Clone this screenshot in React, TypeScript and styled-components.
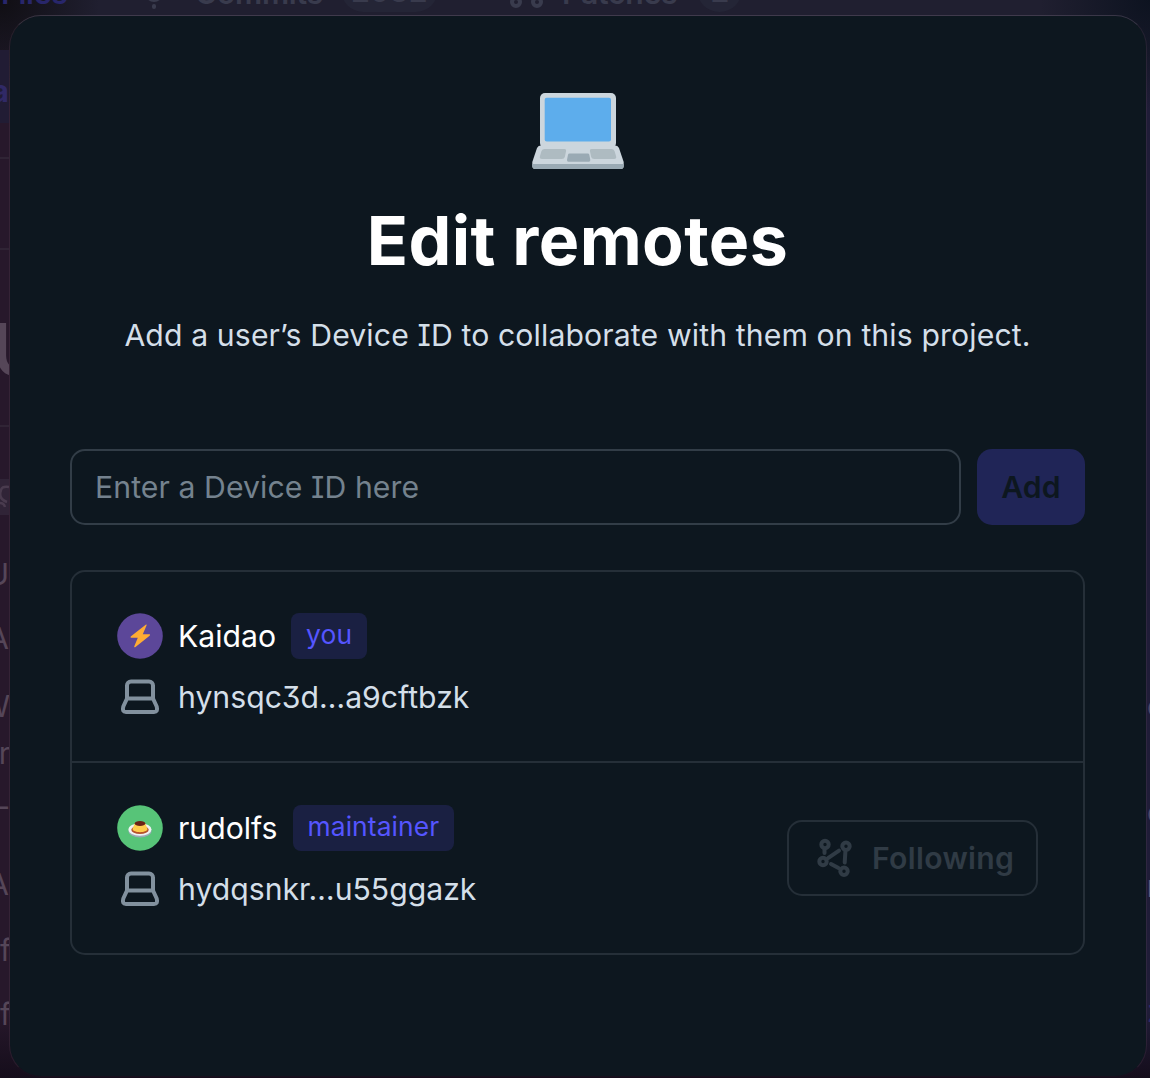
import React from "react";
import styled, { createGlobalStyle } from "styled-components";

const GlobalStyle = createGlobalStyle`
  * { box-sizing: border-box; }
  body { margin: 0; background: #14111b; }
  button, input { font: inherit; letter-spacing: inherit; }
`;

const Page = styled.div`
  width: 1150px;
  height: 1078px;
  overflow: hidden;
  display: grid;
  grid-template-columns: 9px 1138px 3px;
  grid-template-rows: 15px 1063px;
  font-family: Inter, "Noto Sans", sans-serif;
  font-feature-settings: "cv08", "cv09";
  font-size: 30.2px;
  letter-spacing: 0.08px;
  color: #d4dfe9;
  background:
    radial-gradient(circle at 0 0, #100e13 0, rgba(16, 14, 19, 0) 100px),
    radial-gradient(circle at 1150px 0, #0d1320 0, rgba(13, 19, 32, 0) 110px),
    linear-gradient(0deg, #150d1b 0, rgba(21, 13, 27, 0) 65px),
    linear-gradient(180deg, #201f30 0, #201f30 15px, rgba(32, 31, 48, 0) 110px),
    linear-gradient(90deg, #27182b 0, #27182b 10px, #201d38 1140px);
`;

const TabBar = styled.div`
  grid-column: 1 / -1;
  height: 15px;
  overflow: hidden;
  display: flex;
  align-items: flex-end;
  font-weight: 600;
  letter-spacing: -0.3px;
`;

const Tab = styled.div<{ $start: number; $active?: boolean }>`
  flex: none;
  width: 0;
  margin-left: ${(p) => p.$start}px;
  height: 44px;
  display: flex;
  align-items: center;
  line-height: 36px;
  white-space: nowrap;
  color: ${(p) => (p.$active ? "#28266b" : "#393b4d")};
`;

const Count = styled.span<{ $gap: number; $width: number }>`
  flex: none;
  width: ${(p) => p.$width}px;
  height: 45px;
  margin: -8px 0 0 ${(p) => p.$gap}px;
  border-radius: 23px;
  background: #242536;
  line-height: 49px;
  text-align: center;
  letter-spacing: 0;
`;

const TabGlyph = styled.svg`
  flex: none;
  width: 44px;
  height: 44px;
`;

const Gutter = styled.div<{ $right?: boolean }>`
  height: 1063px;
  overflow: hidden;
  display: flex;
  flex-direction: column;
  align-items: ${(p) => (p.$right ? "flex-start" : "flex-end")};
  color: #554658;
`;

const Slice = styled.div<{ $h: number; $fill?: string; $line?: string; $size?: number; $color?: string; $weight?: number; $bleed?: number; $drop?: number }>`
  flex: none;
  min-width: 100%;
  height: ${(p) => p.$h}px;
  line-height: ${(p) => p.$h + (p.$drop || 0) * 2}px;
  margin-right: ${(p) => -(p.$bleed || 0)}px;
  background: ${(p) => p.$fill || "transparent"};
  border-bottom: ${(p) => (p.$line ? `2px solid ${p.$line}` : "0")};
  font-size: ${(p) => p.$size || 30}px;
  font-weight: ${(p) => p.$weight || 400};
  color: ${(p) => p.$color || "inherit"};
  white-space: nowrap;
  letter-spacing: 0;
`;

const GutterIcon = styled.svg`
  display: block;
  width: 9px;
  height: 36px;
`;

const Dialog = styled.section`
  height: 1062px;
  padding: 77px 61px 0 60px;
  border: 1px solid rgba(112, 80, 100, 0.2);
  border-top-color: rgba(112, 100, 120, 0.4);
  border-bottom-color: rgba(32, 24, 38, 0.3);
  border-radius: 32px;
  background: #0d171f;
  background-clip: padding-box;
  display: flex;
  flex-direction: column;
`;

const LaptopEmoji = styled.svg`
  flex: none;
  width: 92px;
  height: 76px;
  align-self: center;
`;

const Title = styled.h1`
  margin: 27px 0 0;
  height: 88px;
  line-height: 88px;
  font-size: 68px;
  font-weight: 700;
  letter-spacing: 0.4px;
  text-align: center;
  color: #fff;
`;

const Description = styled.p`
  margin: 28px 0 0;
  height: 46px;
  line-height: 46px;
  text-align: center;
  white-space: nowrap;
  letter-spacing: 0.12px;
`;

const Apostrophe = styled.span`
  letter-spacing: -2.4px;
`;

const Form = styled.form`
  margin-top: 91px;
  height: 76px;
  display: flex;
  gap: 16px;
`;

const DeviceInput = styled.input`
  flex: 1;
  min-width: 0;
  padding: 0 23px;
  border: 2px solid #323d47;
  border-radius: 15px;
  outline: 0;
  background: transparent;
  color: #d4dfe9;
  &::placeholder { color: #74828e; opacity: 1; }
`;

const AddButton = styled.button`
  width: 108px;
  padding: 0;
  border: 0;
  border-radius: 15px;
  background: #202557;
  color: #0d171f;
  font-weight: 600;
`;

const RemoteList = styled.ul`
  list-style: none;
  margin: 45px 0 0;
  padding: 0;
  height: 385px;
  border: 2px solid #252f38;
  border-radius: 15px;
`;

const Remote = styled.li`
  height: 189px;
  padding: 0 45px;
  display: flex;
  align-items: center;
  justify-content: space-between;
  & + & {
    height: 192px;
    border-top: 2px solid #252f38;
  }
`;

const Identity = styled.div`
  display: flex;
  flex-direction: column;
  gap: 15px;
`;

const Line = styled.div<{ $bright?: boolean }>`
  height: 46px;
  line-height: 46px;
  display: flex;
  align-items: center;
  gap: 15px;
  white-space: nowrap;
  letter-spacing: 0;
  color: ${(p) => (p.$bright ? "#fff" : "#d4dfe9")};
`;

const Avatar = styled.svg`
  flex: none;
  width: 46px;
  height: 46px;
`;

const Badge = styled.span`
  height: 46px;
  padding: 0 15px;
  border-radius: 8px;
  background: #1a2042;
  color: #5555ff;
  font-size: 26.4px;
  line-height: 43px;
  letter-spacing: 0.08px;
`;

const StrokeIcon = styled.svg`
  flex: none;
  width: 46px;
  height: 46px;
  fill: none;
  stroke-width: 4;
  stroke-linecap: round;
  stroke-linejoin: round;
`;

const FollowButton = styled.button`
  width: 251px;
  height: 76px;
  padding: 0 0 0 22px;
  border: 2px solid #252f38;
  border-radius: 15px;
  background: transparent;
  color: #303b45;
  font-weight: 600;
  letter-spacing: 0.3px;
  display: flex;
  align-items: center;
  gap: 15px;
`;

const DeviceIcon = () => (
  <StrokeIcon viewBox="0 0 46 46" stroke="#82919e">
    <path d="M10 24.500V11.500a4 4 0 0 1 4-4h18a4 4 0 0 1 4 4v13H10L6.300 32.500Q4.800 38 9 38H37Q41.200 38 39.700 32.500L36 24.500" />
  </StrokeIcon>
);

const NetworkIcon = () => (
  <StrokeIcon viewBox="0 0 46 46" stroke="#303b45">
    <circle cx="14" cy="9.500" r="3.700" />
    <circle cx="35" cy="11.300" r="3.700" />
    <circle cx="12" cy="26.500" r="3.700" />
    <circle cx="33" cy="36.200" r="3.700" />
    <path d="M13.500 14.500v3.500M17 23.200l11-7.500M34.400 16.500l-.7 11M20 29l7.500 4" />
  </StrokeIcon>
);

const BoltAvatar = () => (
  <Avatar viewBox="0 0 46 46">
    <circle cx="23" cy="23" r="22.800" fill="#5c4799" />
    <path
      d="M28.700 11.700 14 23.200c-.8.800-.5 1.500.5 1.500h6.300l-3.500 8.600c-.4 1 .5 1.300 1.200.7L32.600 22.700c.8-.8.500-1.400-.5-1.400h-6.300l3.700-8.700c.4-.9-.2-1.400-.8-.9Z"
      fill="#ffac33"
    />
  </Avatar>
);

const CustardAvatar = () => (
  <Avatar viewBox="0 0 46 46">
    <circle cx="23" cy="23" r="22.800" fill="#57c478" />
    <ellipse cx="23" cy="26" rx="11.500" ry="6.500" fill="#99aab5" />
    <ellipse cx="23" cy="24.500" rx="11.500" ry="6.200" fill="#f0f2f3" />
    <ellipse cx="23" cy="24.700" rx="8.700" ry="4.300" fill="#b5532b" />
    <path d="M17.700 18.500 15.500 24c1 4.200 14 4.200 15 0l-2.200-5.500Z" fill="#ffcc4d" />
    <ellipse cx="23" cy="18.500" rx="5.300" ry="2.600" fill="#6b2115" />
  </Avatar>
);

const remotes = [
  { name: "Kaidao", role: "you", device: "hynsqc3d…a9cftbzk", avatar: <BoltAvatar />, following: false },
  { name: "rudolfs", role: "maintainer", device: "hydqsnkr…u55ggazk", avatar: <CustardAvatar />, following: true },
];

export default function App() {
  return (
    <>
      <GlobalStyle />
      <Page>
        <TabBar>
          <Tab $start={1} $active>Files</Tab>
          <Tab $start={131}>
            <TabGlyph viewBox="0 0 44 44" fill="none" stroke="#393b4d" strokeWidth="4" strokeLinecap="round">
              <circle cx="22" cy="22" r="7" />
              <path d="M22 35v1" />
            </TabGlyph>
          </Tab>
          <Tab $start={63}>Commits<Count $gap={18} $width={97}>2032</Count></Tab>
          <Tab $start={309}>
            <TabGlyph viewBox="0 0 44 44" fill="none" stroke="#393b4d" strokeWidth="4">
              <circle cx="12" cy="31" r="4" />
              <circle cx="33" cy="31" r="4" />
            </TabGlyph>
          </Tab>
          <Tab $start={58}>Patches<Count $gap={20} $width={45}>2</Count></Tab>
        </TabBar>

        <Gutter>
          <Slice $h={35} />
          <Slice $h={73} $fill="#211c34" $color="#302966" $weight={700} $drop={5}>a</Slice>
          <Slice $h={36} $line="#302435" />
          <Slice $h={91} $line="#302435" />
          <Slice $h={177} $line="#302435" $size={96} $bleed={38} $drop={2}>u</Slice>
          <Slice $h={52} />
          <Slice $h={36} $fill="#302437">
            <GutterIcon viewBox="0 0 9 36" fill="none" stroke="#493b4e" strokeWidth="2.500">
              <path d="M9 8Q2 7 1 11q-2 6 1 9 2 2 5 3M0 24q4 0 5 4" />
            </GutterIcon>
          </Slice>
          <Slice $h={34} />
          <Slice $h={50}>U</Slice>
          <Slice $h={14} />
          <Slice $h={50}>A</Slice>
          <Slice $h={18} />
          <Slice $h={50} $bleed={1}>W</Slice>
          <Slice $h={44} $bleed={1}>r</Slice>
          <Slice $h={6} />
          <Slice $h={50} $bleed={-1}>–</Slice>
          <Slice $h={28} />
          <Slice $h={50}>A</Slice>
          <Slice $h={16} />
          <Slice $h={50} $bleed={2}>If</Slice>
          <Slice $h={14} />
          <Slice $h={50} $bleed={2}>If</Slice>
        </Gutter>

        <Dialog>
          <LaptopEmoji viewBox="0 0 92 76">
            <rect x="8" y="0" width="76" height="55" rx="5" fill="#ccd6dd" />
            <rect x="12.700" y="4.800" width="66.300" height="43.700" rx="2" fill="#5dadec" />
            <path d="M8.500 52.500h75q2.500 0 3.500 2.500l4.700 14v4q0 3-3 3H3.300q-3 0-3-3v-4L5 55q1-2.500 3.500-2.500Z" fill="#ccd6dd" />
            <path d="M.3 71h91.400V73q0 3-3 3H3.300q-3 0-3-3Z" fill="#9aaab4" />
            <path d="M12.500 56H32.500q2 0 1.600 2l-1.300 6q-.5 2-3 2H10q-3 0-2-3l1.500-5q.8-2 3-2Z" fill="#aebbc1" />
            <path d="M79.500 56H59.500q-2 0-1.600 2l1.300 6q.5 2 3 2H82q3 0 2-3l-1.500-5q-.8-2-3-2Z" fill="#aebbc1" />
            <path d="M37.500 60.500h18.300q1.200 0 1.500 1.200l1 5q.3 2-1.500 2H36.500q-1.800 0-1.500-2l1-5q.3-1.200 1.500-1.200Z" fill="#9aaab4" />
          </LaptopEmoji>
          <Title>Edit remotes</Title>
          <Description>
            Add a user<Apostrophe>’</Apostrophe>s Device ID to collaborate with them on this project.
          </Description>
          <Form onSubmit={(e) => e.preventDefault()}>
            <DeviceInput placeholder="Enter a Device ID here" />
            <AddButton type="submit" disabled>Add</AddButton>
          </Form>
          <RemoteList>
            {remotes.map((r) => (
              <Remote key={r.name}>
                <Identity>
                  <Line $bright>
                    {r.avatar}
                    {r.name}
                    <Badge>{r.role}</Badge>
                  </Line>
                  <Line>
                    <DeviceIcon />
                    {r.device}
                  </Line>
                </Identity>
                {r.following && (
                  <FollowButton type="button" disabled>
                    <NetworkIcon />
                    Following
                  </FollowButton>
                )}
              </Remote>
            ))}
          </RemoteList>
        </Dialog>

        <Gutter $right>
          <Slice $h={680} />
          <Slice $h={22} $color="#504c69">c</Slice>
          <Slice $h={84} />
          <Slice $h={22} $color="#504c69">e</Slice>
          <Slice $h={48} />
          <Slice $h={30} $color="#615d7b" $weight={600}>n</Slice>
          <Slice $h={94} />
          <Slice $h={32} $color="#302b69">z</Slice>
        </Gutter>
      </Page>
    </>
  );
}
